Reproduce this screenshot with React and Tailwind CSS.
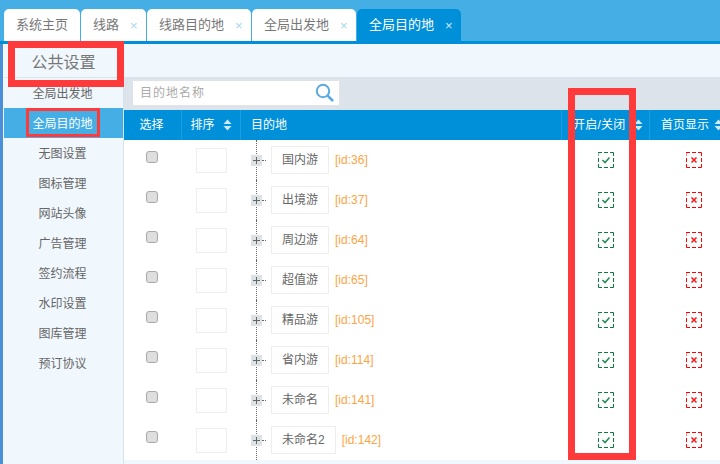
const font = { fontFamily: '"Liberation Sans", "Noto Sans CJK SC", sans-serif' };

const tabs = [
  { label: '系统主页', width: 'w-[76px]' },
  { label: '线路', width: 'w-[65px]', close: true },
  { label: '线路目的地', width: 'w-[104px]', close: true },
  { label: '全局出发地', width: 'w-[104px]', close: true },
  { label: '全局目的地', width: 'w-[104px]', close: true, active: true },
];

const menu = ['全局出发地', '全局目的地', '无图设置', '图标管理', '网站头像', '广告管理', '签约流程', '水印设置', '图库管理', '预订协议'];

const rows = [
  { name: '国内游', id: 36 },
  { name: '出境游', id: 37 },
  { name: '周边游', id: 64 },
  { name: '超值游', id: 65 },
  { name: '精品游', id: 105 },
  { name: '省内游', id: 114 },
  { name: '未命名', id: 141 },
  { name: '未命名2', id: 142 },
];

// dashed square: solid corners plus one dash in the middle of each side
const dashedBox = 'M0 4 V0.5 H4 M6 0.5 H10 M12 0.5 H15.5 V4 M15.5 6 V10 M15.5 12 V15.5 H12 M10 15.5 H6 M4 15.5 H0.5 V12 M0.5 10 V6';

const SortIcon = () => (
  <svg width="9" height="12" viewBox="0 0 9 12" className="shrink-0">
    <path d="M4.5 0.5 L8.5 5 H0.5 Z M0.5 7 H8.5 L4.5 11.5 Z" fill="#cfeafa" />
  </svg>
);

const SearchIcon = () => (
  <svg width="20" height="20" viewBox="0 0 20 20" fill="none" stroke="#5aa9e0">
    <circle cx="8" cy="8" r="6.2" strokeWidth="2" />
    <path d="M12.6 12.6 L18 18" strokeWidth="2.6" />
  </svg>
);

const PlusBox = () => (
  <svg width="11" height="11" viewBox="0 0 11 11" className="relative">
    <rect width="11" height="11" fill="#dfe2e5" />
    <path d="M2 5.5 H9 M5.5 2 V9" stroke="#666" strokeWidth="1" />
  </svg>
);

const OnIcon = () => (
  <svg width="16" height="16" viewBox="0 0 16 16" fill="none">
    <path d={dashedBox} stroke="#0b7a3e" />
    <path d="M4.5 8 L7 10.5 L11.5 5.5" stroke="#2a8a58" strokeWidth="1.6" />
  </svg>
);

const OffIcon = () => (
  <svg width="16" height="16" viewBox="0 0 16 16" fill="none">
    <path d={dashedBox} stroke="#f00" />
    <path d="M5.5 5.5 L10.5 10.5 M10.5 5.5 L5.5 10.5" stroke="#f01c1c" strokeWidth="1.6" />
  </svg>
);

const HeaderCell = ({ className, children }) => (
  <div className={`flex h-full items-center border-r border-[#1a9ee2] text-xs text-white ${className}`}>{children}</div>
);

export default function App() {
  return (
    <div style={font} className="relative flex h-[464px] w-[720px] flex-col overflow-hidden bg-[#f0f7fd]">
      {/* tabs */}
      <div className="flex h-[41px] shrink-0 items-end gap-px bg-[#45aee5] pl-1">
        {tabs.map((tab) => (
          <div
            key={tab.label}
            className={`flex h-8 items-center rounded-t-[5px] pl-3 text-[13px] ${tab.width} ${
              tab.active ? 'bg-[#0090d9] text-white' : 'bg-white text-[#777]'
            }`}
          >
            <span>{tab.label}</span>
            {tab.close && (
              <span className={`ml-[11px] text-[13px] leading-none ${tab.active ? 'text-[#cfeafa]' : 'text-[#a8d8f0]'}`}>×</span>
            )}
          </div>
        ))}
      </div>
      <div className="h-[3px] shrink-0 bg-[#0090d9]" />

      <div className="flex min-h-0 flex-1 border-l-[3px] border-[#4a90d9] pl-px">
        {/* sidebar */}
        <div className="flex w-[120px] shrink-0 flex-col border-r border-[#d3e3ef] bg-[#f0f7fd]">
          <div className="flex h-[34px] items-center justify-center border-b border-[#dde3ea] pt-1 text-base text-[#777]">公共设置</div>
          <div className="flex flex-col">
            {menu.map((item, i) => (
              <div
                key={item}
                className={`flex h-[30px] items-center justify-center pr-0.5 pt-0.5 text-xs ${
                  i === 1 ? 'bg-[#45aee5] text-white' : 'text-[#666]'
                }`}
              >
                {item}
              </div>
            ))}
          </div>
        </div>

        {/* main */}
        <div className="flex min-w-0 flex-1 flex-col">
          <div className="h-[33px] shrink-0" />
          <div className="flex h-[33px] shrink-0 items-center bg-[#dde3ea] pl-[9px]">
            <div className="flex h-[25px] w-[207px] items-center justify-between border-b border-r border-[#e4e4e4] bg-white pl-[7px] pr-1">
              <span className="text-xs tracking-[1px] text-[#aaa]">目的地名称</span>
              <SearchIcon />
            </div>
          </div>

          <div className="flex h-[30px] w-[640px] shrink-0 items-center bg-[#0090d9]">
            <HeaderCell className="w-[58px] justify-center pr-0.5">选择</HeaderCell>
            <HeaderCell className="w-[59px] justify-center gap-2">
              排序 <SortIcon />
            </HeaderCell>
            <HeaderCell className="w-[321px] pl-[10px]">目的地</HeaderCell>
            <HeaderCell className="w-[88px] pl-[11px]">
              <span className="w-[61px] tracking-[0.2px]">开启/关闭</span> <SortIcon />
            </HeaderCell>
            <div className="flex items-center gap-[5px] pl-[11px] text-xs text-white">
              <span className="whitespace-nowrap">首页显示</span> <SortIcon />
            </div>
          </div>

          <div className="flex flex-col bg-white">
            {rows.map((row) => (
              <div key={row.id} className="flex h-10 w-[640px] shrink-0 items-start">
                <div className="flex w-[58px] justify-center pr-0.5 pt-[11px]">
                  <div className="h-3 w-3 rounded-[3px] border border-[#aaa] bg-[#dedede]" />
                </div>
                <div className="flex w-[59px] justify-center pt-2">
                  <div className="h-[25px] w-[31px] border border-[#eee] bg-white" />
                </div>
                <div className="flex h-full w-[321px] items-start pl-[10px]">
                  <div className="relative flex h-full w-[11px] justify-center pt-[15px]">
                    <div className="absolute inset-y-0 left-[5px] border-l border-dotted border-[#666]" />
                    <PlusBox />
                  </div>
                  <div className="mt-5 w-1 border-t border-dotted border-[#666]" />
                  <div className="ml-[5px] mt-1.5 flex h-7 items-center border border-[#eee] px-[10px] text-xs text-[#666]">{row.name}</div>
                  <span className="ml-1.5 mt-[13px] text-xs leading-[14px] text-[#ffa445]">[id:{row.id}]</span>
                </div>
                <div className="flex w-[88px] justify-center pt-3">
                  <OnIcon />
                </div>
                <div className="flex w-[88px] justify-center pt-3">
                  <OffIcon />
                </div>
              </div>
            ))}
          </div>
        </div>
      </div>

      {/* red annotation boxes drawn over the screenshot */}
      <div className="absolute left-2 top-[41px] h-[46px] w-[116px] border-[7px] border-[#ff3a3a]" />
      <div className="absolute left-[26px] top-[108px] h-[29px] w-[74px] border-[3px] border-[#ff3a3a]" />
      <div className="absolute left-[568px] top-[88px] h-[372px] w-[68px] border-[7px] border-[#ff3a3a]" />
    </div>
  );
}
